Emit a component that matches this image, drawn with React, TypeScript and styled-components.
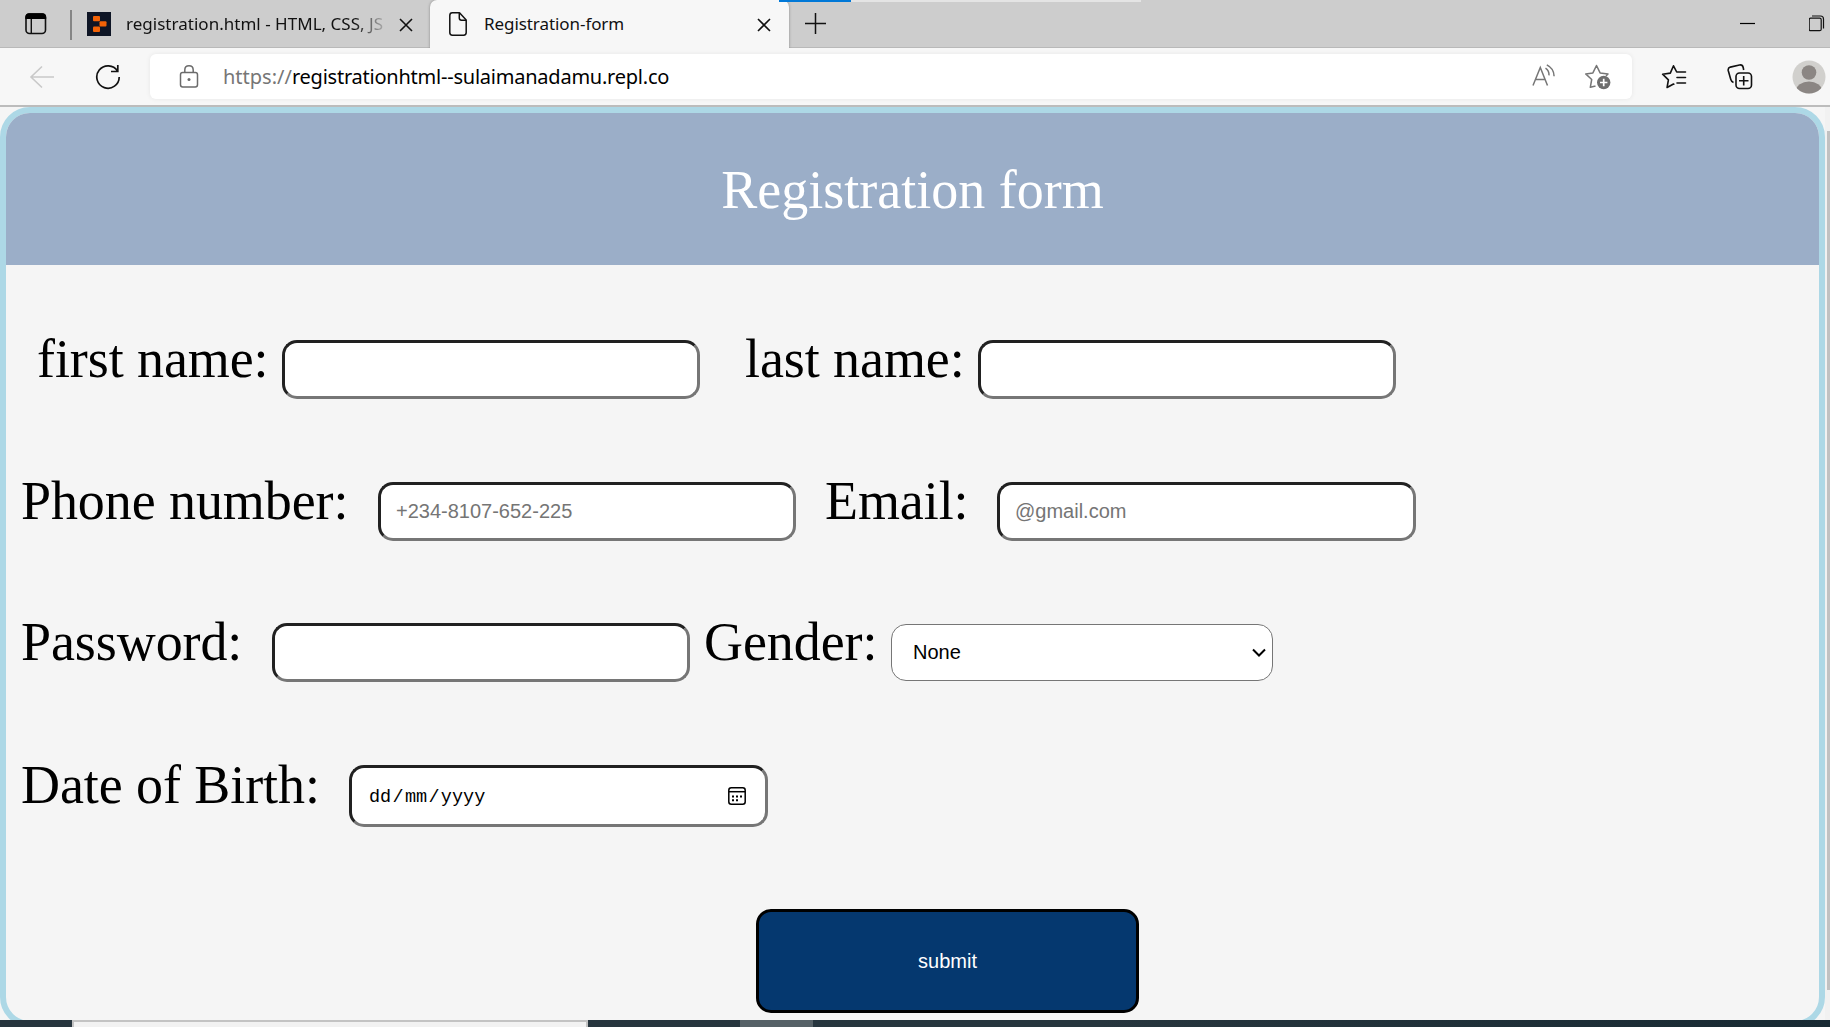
import React from 'react';
import styled, { createGlobalStyle } from 'styled-components';

const GlobalStyle = createGlobalStyle`
  *, *::before, *::after { box-sizing: border-box; }
  html, body { margin: 0; padding: 0; overflow: hidden; background: #f5f5f5; }
  svg { display: block; flex: none; }
`;

const Window = styled.div`
  width: 1830px;
  height: 1027px;
  display: flex;
  flex-direction: column;
  overflow: hidden;
  position: relative;
`;

/* ---------- browser chrome ---------- */
const uiFont = `'Noto Sans', 'Open Sans', sans-serif`;

const TabStrip = styled.div`
  flex: none;
  height: 48px;
  display: flex;
  background: #cdcdcd;
  box-shadow: inset 0 -1px 0 #b9b9b9;
`;

const TabActions = styled.div`
  width: 72px;
  height: 48px;
  padding-left: 25px;
  display: flex;
  align-items: center;
  justify-content: space-between;
`;

const Divider = styled.div`
  width: 2px;
  height: 30px;
  margin-top: 2px;
  background: #858585;
`;

const Tab = styled.div<{ $active?: boolean; $width: number }>`
  width: ${p => p.$width}px;
  height: 48px;
  display: flex;
  align-items: center;
  background: ${p => (p.$active ? '#f7f7f7' : 'transparent')};
  border-radius: ${p => (p.$active ? '7px 7px 0 0' : '0')};
  box-shadow: ${p => (p.$active ? '0 0 3px rgba(0,0,0,.35)' : 'none')};
  clip-path: ${p => (p.$active ? 'inset(0 -4px 0 -4px)' : 'none')};
  padding-left: ${p => (p.$active ? 19 : 15)}px;
`;

const TabTitle = styled.span<{ $width: number; $left: number; $spacing: number; $fade?: boolean }>`
  width: ${p => p.$width}px;
  margin-left: ${p => p.$left}px;
  font: 400 17px/24px ${uiFont};
  letter-spacing: ${p => p.$spacing}px;
  white-space: nowrap;
  overflow: hidden;
  color: #111;
  mask-image: ${p => (p.$fade ? 'linear-gradient(90deg, #000 88%, transparent 102%)' : 'none')};
`;

const Spacer = styled.div`
  flex: 1;
`;

const NewTab = styled.div`
  padding: 13px 0 0 16px;
`;

const WindowButtons = styled.div`
  width: 90px;
  display: flex;
  justify-content: space-between;
  padding-top: 15px;
`;

const LoadTrack = styled.div`
  position: absolute;
  top: 0;
  left: 779px;
  width: 362px;
  height: 2px;
  background: #e4e4e4;
`;

const LoadBar = styled.div`
  width: 72px;
  height: 2px;
  background: #0078d7;
`;

const Toolbar = styled.div`
  flex: none;
  height: 59px;
  display: flex;
  align-items: flex-start;
  background: #f7f7f7;
  border-bottom: 2px solid #bcbcbc;
`;

const NavButtons = styled.div`
  width: 150px;
  height: 57px;
  display: flex;
  align-items: center;
  gap: 40px;
  padding-left: 29px;
`;

const AddressBar = styled.div`
  width: 1482px;
  height: 45px;
  margin-top: 6px;
  display: flex;
  align-items: center;
  background: #fff;
  border-radius: 6px;
  box-shadow: 0 0 5px rgba(0, 0, 0, 0.07);
  padding: 0 21px 0 29px;
`;

const Url = styled.div`
  margin-left: 24px;
  font: 400 20px/28px ${uiFont};
  letter-spacing: -0.23px;
  color: #000;
  white-space: nowrap;
`;

const Scheme = styled.span`
  color: #767676;
  letter-spacing: 0px;
`;

const AddressIcons = styled.div`
  display: flex;
  gap: 28px;
`;

const ToolbarIcons = styled.div`
  height: 57px;
  display: flex;
  align-items: center;
  padding-left: 29px;
  gap: 39.5px;
`;

/* ---------- page ---------- */
const Viewport = styled.div`
  height: 913px;
  flex: none;
  display: flex;
  overflow: hidden;
  background: #f5f5f5;
`;

const Card = styled.div`
  width: 1825px;
  height: 920px;
  flex: none;
  border: 6px solid #add8e6;
  border-radius: 30px;
  overflow: hidden;
  background: #f5f5f5;
  font-family: 'Liberation Serif', 'Times New Roman', serif;
`;

const Header = styled.header`
  height: 152px;
  background: #9baec8;
  display: flex;
  justify-content: center;
  color: #fff;
  font-size: 54px;
  line-height: 154px;
`;

const Title = styled.div`
  margin-top: 0;
`;

const Form = styled.div`
  padding: 75px 0 0 15px;
  display: flex;
  flex-direction: column;
`;

const Row = styled.div<{ $height: number; $indent?: number }>`
  height: ${p => p.$height}px;
  padding-left: ${p => p.$indent ?? 0}px;
  display: flex;
  align-items: flex-start;
`;

const Label = styled.label<{ $width: number; $drop?: number }>`
  width: ${p => p.$width}px;
  flex: none;
  padding-top: ${p => p.$drop ?? 1}px;
  font-size: 54px;
  line-height: 36px;
  letter-spacing: -0.08px;
  white-space: nowrap;
  color: #000;
`;

const Field = styled.input<{ $gap?: number; $width?: number }>`
  width: ${p => p.$width ?? 418}px;
  height: 59px;
  flex: none;
  margin: 0 ${p => p.$gap ?? 0}px 0 0;
  padding: 0 15px;
  border: 3px solid;
  border-color: #212121 #767676 #767676 #212121;
  border-radius: 15px;
  background: #fff;
  font: 400 20px 'Liberation Sans', Arial, sans-serif;
  outline: none;
  &::placeholder { color: #757575; opacity: 1; }
`;

const DateField = styled.div`
  width: 419px;
  height: 62px;
  display: flex;
  align-items: center;
  justify-content: space-between;
  padding: 0 19px 0 17px;
  border: 3px solid;
  border-color: #212121 #767676 #767676 #212121;
  border-radius: 15px;
  background: #fff;
  color: #000;
`;

const DateText = styled.span`
  padding-top: 3px;
  font: 400 18.5px/24px 'Liberation Mono', monospace;
  white-space: pre;
`;

const Slash = styled.span`
  margin: 0 1.3px;
`;

const SelectBox = styled.div`
  width: 382px;
  height: 57px;
  margin-top: 1px;
  display: flex;
  align-items: center;
  justify-content: space-between;
  padding: 0 6px 0 21px;
  border: 1px solid #767676;
  border-radius: 15px;
  background: #fff;
  font: 400 20px 'Liberation Sans', Arial, sans-serif;
  color: #000;
`;

const Submit = styled.button`
  width: 383px;
  height: 104px;
  margin: 2px 0 0 735px;
  padding: 0;
  border: 3px solid #000;
  border-radius: 15px;
  background: #05386f;
  color: #fff;
  font: 400 20px 'Liberation Sans', Arial, sans-serif;
`;

const ScrollTrack = styled.div`
  flex: 1;
  height: 913px;
  padding: 24px 0 0 2px;
  background: #f1f1f1;
`;

const ScrollThumb = styled.div`
  height: 859px;
  background: #c1c1c1;
`;

const Taskbar = styled.div`
  flex: none;
  height: 7px;
  display: flex;
  background: linear-gradient(90deg, #27353e 0, #27363e 60%, #182a33 100%);
`;

const SearchBox = styled.div`
  width: 516px;
  margin-left: 72px;
  border: 2px solid #c3c3c3;
  border-bottom: 0;
  background: #f2f2f2;
`;

const TaskItem = styled.div`
  width: 73px;
  margin-left: 152px;
  background: #566167;
`;

/* ---------- icons ---------- */
const CloseIcon = () => (
  <svg width="14" height="14" viewBox="0 0 14 14" stroke="#111" strokeWidth="1.6" fill="none">
    <path d="M1 1l12 12M13 1L1 13" />
  </svg>
);

const CloseSlot = styled.div<{ $left: number }>`
  margin: 2px 0 0 ${p => p.$left}px;
`;

const App: React.FC = () => (
  <Window>
    <GlobalStyle />
    <TabStrip>
      <TabActions>
        <svg width="22" height="22" viewBox="0 0 22 22">
          <rect x="1" y="1" width="19.5" height="19.5" rx="3.5" fill="none" stroke="#111" strokeWidth="1.6" />
          <path d="M.3 6V4Q.3.2 4 .2h13.500q3.700 0 3.700 3.800v2z" fill="#000" />
          <path d="M6.300 6v14.500" stroke="#111" strokeWidth="1.400" />
        </svg>
        <Divider />
      </TabActions>
      <Tab $width={358}>
        <svg width="24" height="24" viewBox="0 0 24 24">
          <rect width="24" height="24" fill="#0e1525" />
          <g fill="#f26207">
            <rect x="6" y="4" width="7" height="5.300" rx="1" />
            <rect x="12.500" y="9.300" width="7" height="5.300" rx="1" />
            <rect x="6" y="14.600" width="7" height="5.300" rx="1" />
          </g>
        </svg>
        <TabTitle $width={259} $left={15} $spacing={0.02} $fade>registration.html - HTML, CSS, JS</TabTitle>
        <CloseSlot $left={14}><CloseIcon /></CloseSlot>
      </Tab>
      <Tab $width={359} $active>
        <svg width="18" height="24" viewBox="0 0 18 24" fill="none" stroke="#111" strokeWidth="1.500" strokeLinejoin="round">
          <path d="M3.300.8h7.200L17.200 8v12.500q0 2.700-2.600 2.700H3.400Q.8 23.200.8 20.500V3.400Q.8.800 3.300.8z" />
          <path d="M10.300 1v5q0 2.200 2.200 2.200H17" />
        </svg>
        <TabTitle $width={150} $left={17} $spacing={-0.07}>Registration-form</TabTitle>
        <CloseSlot $left={123}><CloseIcon /></CloseSlot>
      </Tab>
      <NewTab>
        <svg width="21" height="21" viewBox="0 0 21 21" stroke="#111" strokeWidth="1.500">
          <path d="M10.500 0v21M0 10.500h21" />
        </svg>
      </NewTab>
      <Spacer />
      <WindowButtons>
        <svg width="16" height="17" viewBox="0 0 16 17"><path d="M0 8.500h15" stroke="#000" strokeWidth="1.200" /></svg>
        <svg width="21" height="17" viewBox="0 0 21 17" fill="none" stroke="#111" strokeWidth="1.200">
          <rect x=".2" y="3.200" width="12" height="12.500" rx="1.500" />
          <path d="M3 1h8.500q3 0 3 3v9.500" />
        </svg>
      </WindowButtons>
    </TabStrip>
    <LoadTrack><LoadBar /></LoadTrack>

    <Toolbar>
      <NavButtons>
        <svg width="26" height="24" viewBox="0 0 26 24" fill="none" stroke="#c9c9c9" strokeWidth="1.600">
          <path d="M25 12H2M13 1.500L2 12l11 10.500" />
        </svg>
        <svg width="26" height="26" viewBox="0 0 26 26" fill="none" stroke="#111" strokeWidth="1.700">
          <path d="M22.500 7.100A11.200 11.200 0 1 0 24.200 13M22.800 .9v6.600h-6.800" />
        </svg>
      </NavButtons>
      <AddressBar>
        <svg width="20" height="24" viewBox="0 0 20 24" fill="none" stroke="#6b6b6b" strokeWidth="1.500">
          <rect x="1.500" y="7.500" width="17" height="14.500" rx="2.200" />
          <path d="M5.800 7.500V5q0-4.200 4.200-4.200T14.200 5v2.500" />
          <circle cx="10" cy="14.500" r="1.500" fill="#6b6b6b" stroke="none" />
        </svg>
        <Url><Scheme>https://</Scheme>registrationhtml--sulaimanadamu.repl.co</Url>
        <Spacer />
        <AddressIcons>
          <svg width="24" height="24" viewBox="0 0 24 24" fill="none" stroke="#767676" strokeWidth="1.500">
            <path d="M1 22.500L8.300 4.500l7.200 18M3.500 16.500h9.600M13.500 5.200q3.700 2.400 3.500 7.200M14.800 1.800q7.200 3.500 7.300 11.500" />
          </svg>
          <svg width="27" height="27" viewBox="0 0 27 27" fill="none" stroke="#767676" strokeWidth="1.500" strokeLinejoin="round">
            <path d="M11.500 23.200h-1l-4.200 1.100 1.400-7.800-6-5.600 7.200-1 3.600-7.400 3.600 7.400 7.900 1-2 2" />
            <circle cx="19.700" cy="19.500" r="6.700" fill="#6e6e6e" stroke="none" />
            <path d="M19.700 15.800v7.400M16 19.500h7.400" stroke="#fff" strokeWidth="1.700" />
          </svg>
        </AddressIcons>
      </AddressBar>
      <ToolbarIcons>
        <svg width="26" height="26" viewBox="0 0 26 26" fill="none" stroke="#111" strokeWidth="1.600" strokeLinejoin="round" strokeLinecap="round">
          <path d="M12.800 20.200l-.3-.200-6.400 3.500 1.300-7.700-5.800-5.600 7.700-1.100 3.200-7.300 3.200 6.200h8.800M16 13.500h8.500M16 19h8.500" />
        </svg>
        <svg width="26" height="26" viewBox="0 0 26 26" fill="none" stroke="#111" strokeWidth="1.600">
          <rect x="9" y="9" width="15.500" height="15.500" rx="3.500" />
          <path d="M16.700 12v9.500M12 16.700h9.500M6.500 18.500q-2-.7-2.700-3L1.300 6.800q-.7-2.800 2-3.700L12.500 1q3-.6 3.700 2.500l.5 2.500" />
        </svg>
        <svg width="34" height="34" viewBox="0 0 34 34">
          <defs><clipPath id="avatar"><circle cx="17" cy="17" r="16.500" /></clipPath></defs>
          <g clipPath="url(#avatar)">
            <rect width="34" height="34" fill="#d1d0cd" />
            <circle cx="17" cy="12.500" r="7.300" fill="#8b8683" />
            <ellipse cx="17" cy="31" rx="13" ry="9.500" fill="#8b8683" />
          </g>
        </svg>
      </ToolbarIcons>
    </Toolbar>

    <Viewport>
      <Card>
        <Header><Title>Registration form</Title></Header>
        <Form>
          <Row $height={142} $indent={16}>
            <Label $width={245}>first name:</Label>
            <Field $gap={45} />
            <Label $width={233}>last name:</Label>
            <Field />
          </Row>
          <Row $height={141}>
            <Label $width={357}>Phone number:</Label>
            <Field $gap={29} placeholder="+234-8107-652-225" />
            <Label $width={172}>Email:</Label>
            <Field $width={419} placeholder="@gmail.com" />
          </Row>
          <Row $height={142}>
            <Label $width={251}>Password:</Label>
            <Field type="password" $gap={14} />
            <Label $width={187}>Gender:</Label>
            <SelectBox>
              None
              <svg width="14" height="10" viewBox="0 0 14 10" fill="none" stroke="#000" strokeWidth="2">
                <path d="M1 1.500l6 6 6-6" />
              </svg>
            </SelectBox>
          </Row>
          <Row $height={142}>
            <Label $width={328} $drop={2}>Date of Birth:</Label>
            <DateField>
              <DateText>dd<Slash>/</Slash>mm<Slash>/</Slash>yyyy</DateText>
              <svg width="18" height="18" viewBox="0 0 18 18" fill="none" stroke="#000" strokeWidth="1.500">
                <rect x=".8" y=".8" width="16.400" height="16.400" rx="2.500" />
                <path d="M1 4.700h16" />
                <path d="M4 9.500h2M8 9.500h2M12 9.500h2M4 13.200h2M8 13.200h2" strokeWidth="2" />
              </svg>
            </DateField>
          </Row>
          <Submit type="button">submit</Submit>
        </Form>
      </Card>
      <ScrollTrack><ScrollThumb /></ScrollTrack>
    </Viewport>
    <Taskbar>
      <SearchBox />
      <TaskItem />
    </Taskbar>
  </Window>
);

export default App;
